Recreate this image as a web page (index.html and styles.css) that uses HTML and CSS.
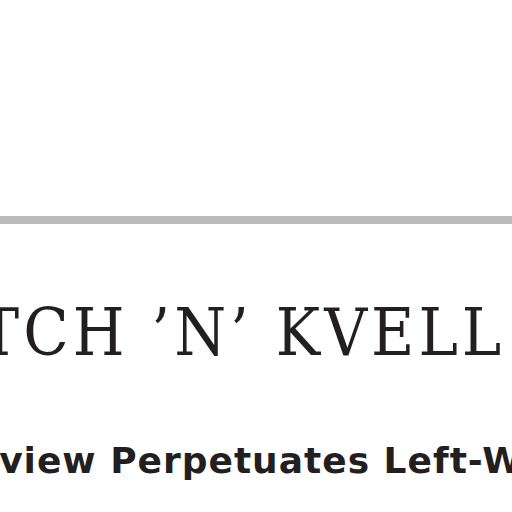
FILE: index.html
```html
<!DOCTYPE html>
<html>
<head>
<meta charset="utf-8">
<link rel="stylesheet" href="styles.css">
</head>
<body>
<div class="page">
  <header class="masthead"></header>
  <div class="rule"></div>
  <h1 class="title">KVETCH ’N’ KVELL</h1>
  <h2 class="headline">Review Perpetuates Left-Wing Myths</h2>
</div>
</body>
</html>
```
FILE: styles.css
```css
html, body {
  margin: 0;
  padding: 0;
  background: #ffffff;
  overflow: hidden;
}
.page {
  width: 512px;
  height: 512px;
  overflow: hidden;
}
.masthead {
  height: 216px;
}
.rule {
  height: 8px;
  background: #bbbbbb;
}
.title {
  margin: 76px 0 0 -163px;
  font-family: "DejaVu Serif Condensed", "DejaVu Serif", serif;
  font-stretch: condensed;
  font-weight: 400;
  font-size: 66px;
  line-height: 1;
  letter-spacing: 4px;
  white-space: nowrap;
  color: #231f20;
}
.headline {
  margin: 77px 0 0 -55px;
  font-family: "DejaVu Sans", sans-serif;
  font-weight: 700;
  font-size: 36px;
  line-height: 1;
  letter-spacing: 1px;
  white-space: nowrap;
  color: #231f20;
}
```
